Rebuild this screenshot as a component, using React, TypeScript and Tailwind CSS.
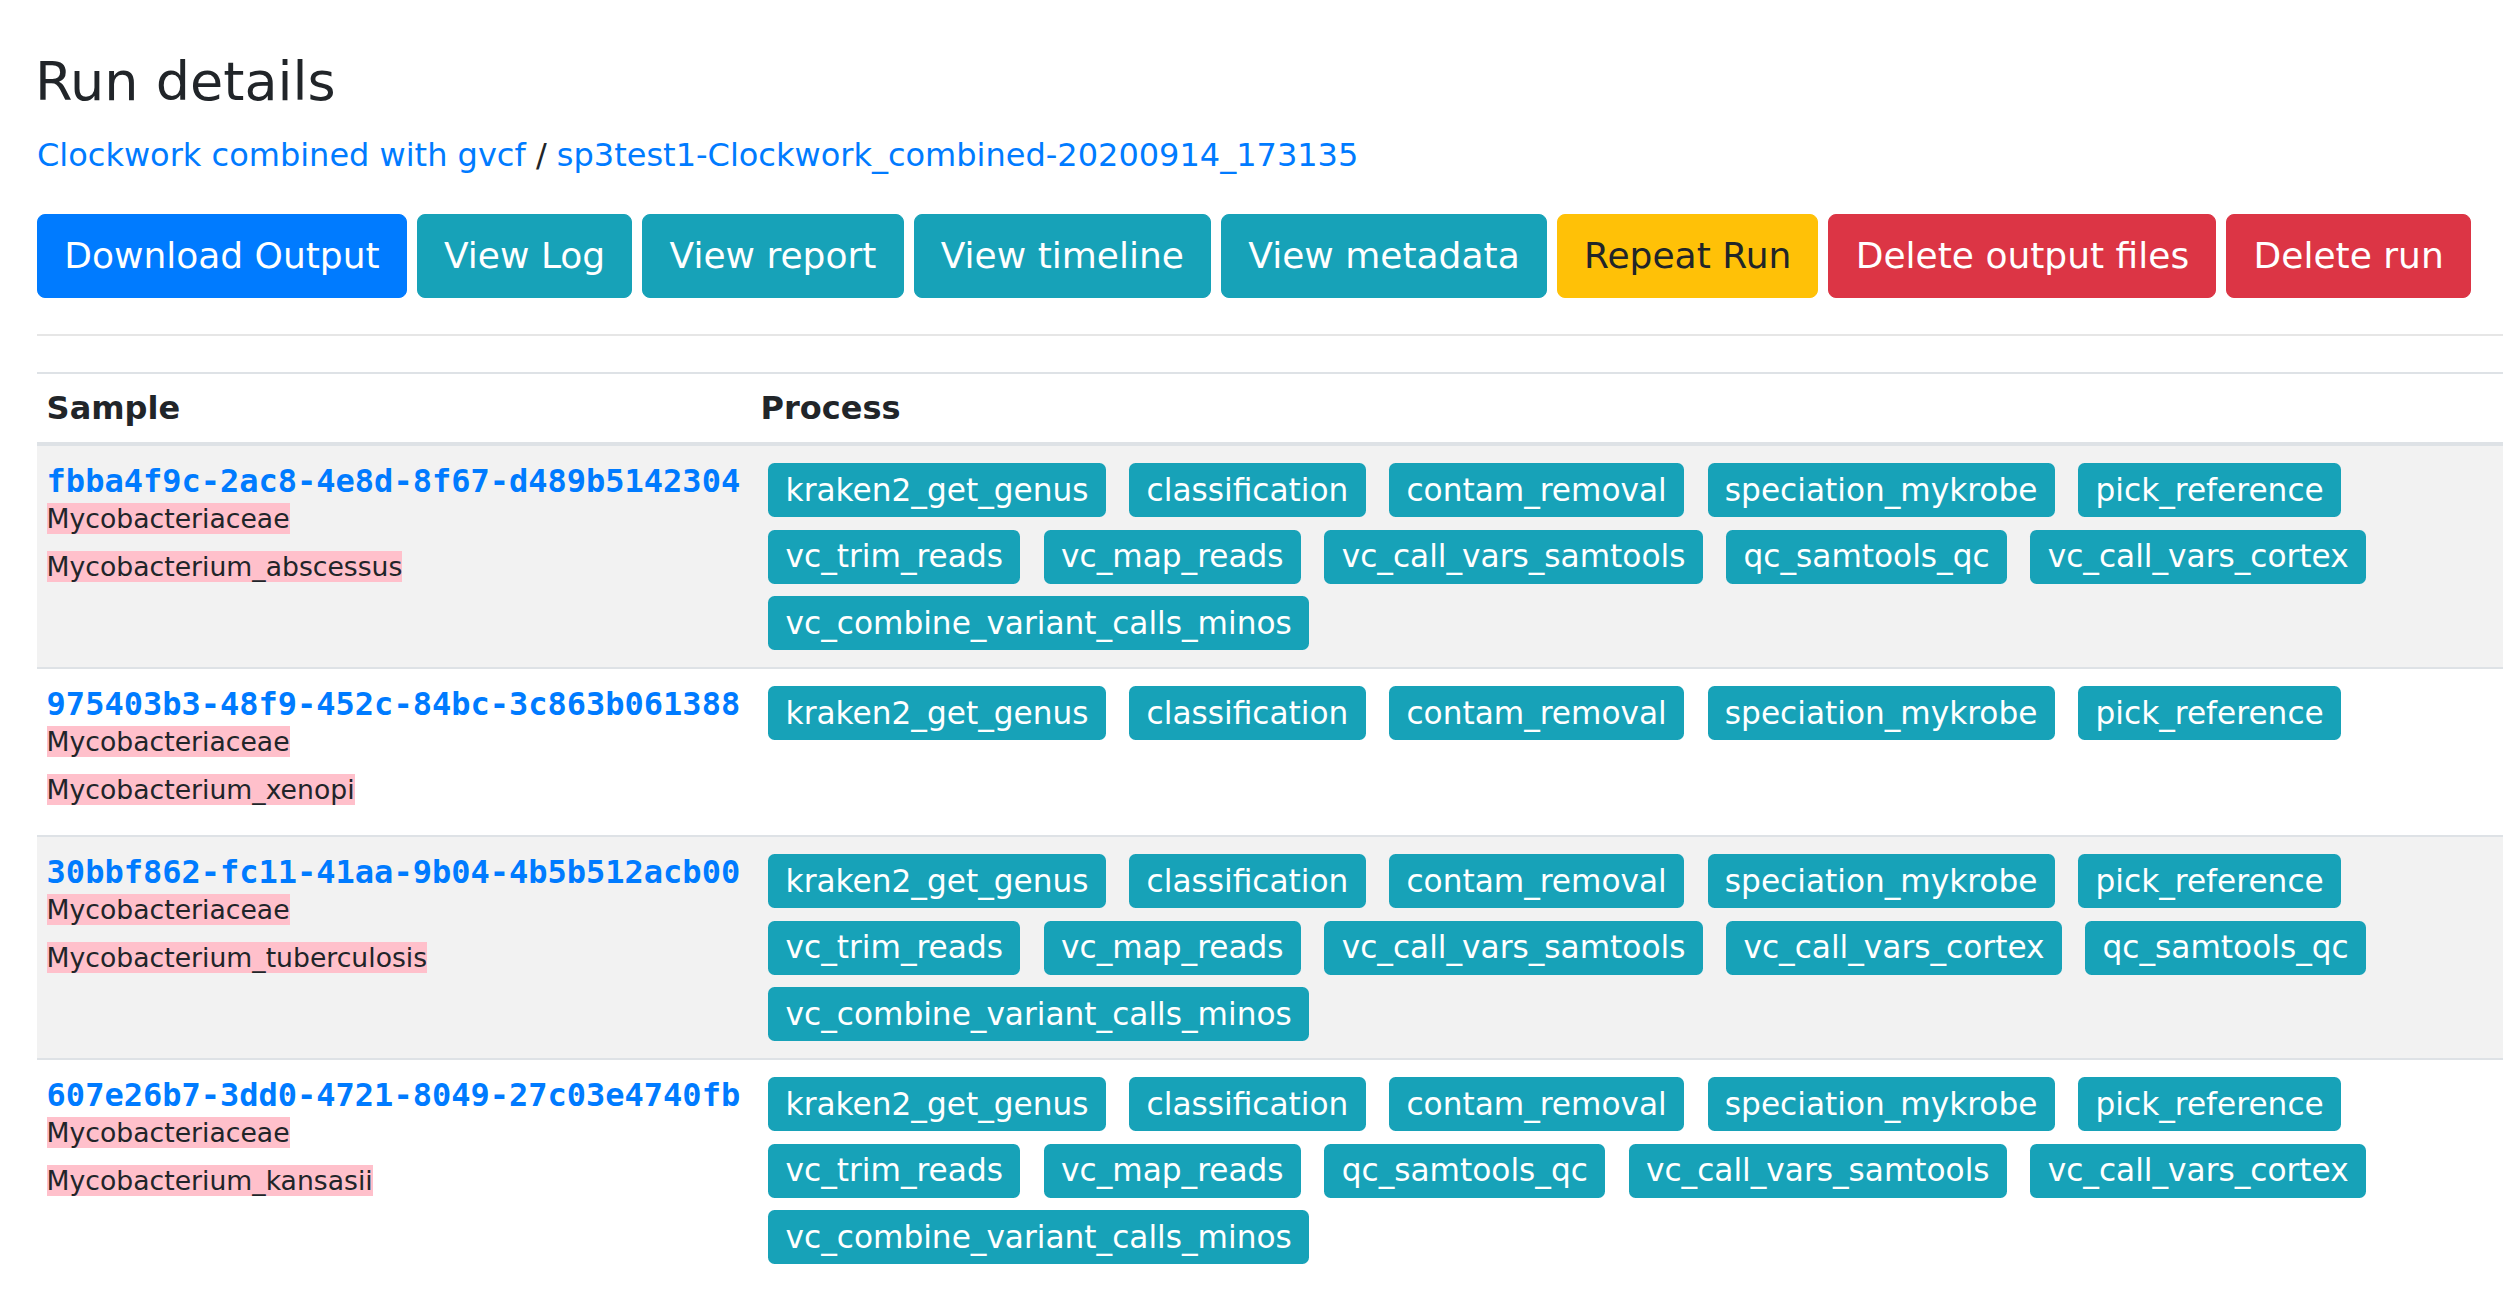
import React from 'react';

const BUTTONS = [
  { label: 'Download Output', cls: 'bg-[#007bff] border-[#007bff] text-white' },
  { label: 'View Log', cls: 'bg-[#17a2b8] border-[#17a2b8] text-white' },
  { label: 'View report', cls: 'bg-[#17a2b8] border-[#17a2b8] text-white' },
  { label: 'View timeline', cls: 'bg-[#17a2b8] border-[#17a2b8] text-white' },
  { label: 'View metadata', cls: 'bg-[#17a2b8] border-[#17a2b8] text-white' },
  { label: 'Repeat Run', cls: 'bg-[#ffc107] border-[#ffc107] text-[#212529]' },
  { label: 'Delete output files', cls: 'bg-[#dc3545] border-[#dc3545] text-white' },
  { label: 'Delete run', cls: 'bg-[#dc3545] border-[#dc3545] text-white' },
];

const BASE = ['kraken2_get_genus', 'classification', 'contam_removal', 'speciation_mykrobe', 'pick_reference'];

const SAMPLES = [
  {
    id: 'fbba4f9c-2ac8-4e8d-8f67-d489b5142304',
    species: 'Mycobacterium_abscessus',
    procs: [...BASE, 'vc_trim_reads', 'vc_map_reads', 'vc_call_vars_samtools', 'qc_samtools_qc', 'vc_call_vars_cortex', 'vc_combine_variant_calls_minos'],
  },
  {
    id: '975403b3-48f9-452c-84bc-3c863b061388',
    species: 'Mycobacterium_xenopi',
    procs: BASE,
  },
  {
    id: '30bbf862-fc11-41aa-9b04-4b5b512acb00',
    species: 'Mycobacterium_tuberculosis',
    procs: [...BASE, 'vc_trim_reads', 'vc_map_reads', 'vc_call_vars_samtools', 'vc_call_vars_cortex', 'qc_samtools_qc', 'vc_combine_variant_calls_minos'],
  },
  {
    id: '607e26b7-3dd0-4721-8049-27c03e4740fb',
    species: 'Mycobacterium_kansasii',
    procs: [...BASE, 'vc_trim_reads', 'vc_map_reads', 'qc_samtools_qc', 'vc_call_vars_samtools', 'vc_call_vars_cortex', 'vc_combine_variant_calls_minos'],
  },
];

function Badge({ name }: { name: string }) {
  return (
    <span className="flex h-[54px] items-center rounded-[6.5px] bg-[#17a2b8] px-[17.3px] text-[31.2px] leading-none text-white">
      {name}
    </span>
  );
}

function Tag({ text }: { text: string }) {
  return <span className="block w-fit bg-[#ffc0cb] text-[26.67px] leading-[31px] text-[#212529]">{text}</span>;
}

export default function App() {
  return (
    <div className="min-h-screen bg-white pl-[37px] pr-[14px] pt-[50px] font-['DejaVu_Sans',sans-serif] text-[#212529]">
      <h1 className="-ml-[2px] text-[54px] font-normal leading-[64.8px]">Run details</h1>

      <div className="mt-[16px] text-[32px] leading-[48px]">
        <a className="text-[#007bff]">Clockwork combined with gvcf</a> /{' '}
        <a className="text-[#007bff]">sp3test1-Clockwork_combined-20200914_173135</a>
      </div>

      <div className="mt-[35px] flex gap-[10px]">
        {BUTTONS.map((b) => (
          <button key={b.label} className={`h-[84px] rounded-[8px] border px-[26.2px] text-[36px] leading-[54px] ${b.cls}`}>
            {b.label}
          </button>
        ))}
      </div>

      <hr className="mt-[36px] border-0 border-t-2 border-[#e6e6e6]" />

      <div className="mt-[36px] border-t-2 border-[#dee2e6]">
        <div className="grid h-[72.7px] grid-cols-[714px_1fr] items-center border-b-4 border-[#dee2e6] text-[32px] font-bold leading-[48px]">
          <div className="pl-[9.6px]">Sample</div>
          <div className="pl-[9.6px]">Process</div>
        </div>

        {SAMPLES.map((s, i) => (
          <div
            key={s.id}
            className={`grid grid-cols-[714px_1fr] ${i > 0 ? 'border-t-2 border-[#dee2e6]' : ''} ${i % 2 === 0 ? 'bg-[#f2f2f2]' : 'bg-white'}`}
          >
            <div className="pb-[30px] pl-[9.6px] pt-[17px]">
              <a className="block whitespace-nowrap font-['DejaVu_Sans_Mono',monospace] text-[32px] font-bold leading-[37px] text-[#007bff]">
                {s.id}
              </a>
              <div className="mt-[3px]">
                <Tag text="Mycobacteriaceae" />
              </div>
              <div className="mt-[17px]">
                <Tag text={s.species} />
              </div>
            </div>
            <div className="flex flex-wrap content-start gap-x-[23.5px] gap-y-[12.5px] py-[17px] pl-[17.3px] pr-[9.6px]">
              {s.procs.map((p) => (
                <Badge key={p} name={p} />
              ))}
            </div>
          </div>
        ))}
      </div>
    </div>
  );
}
